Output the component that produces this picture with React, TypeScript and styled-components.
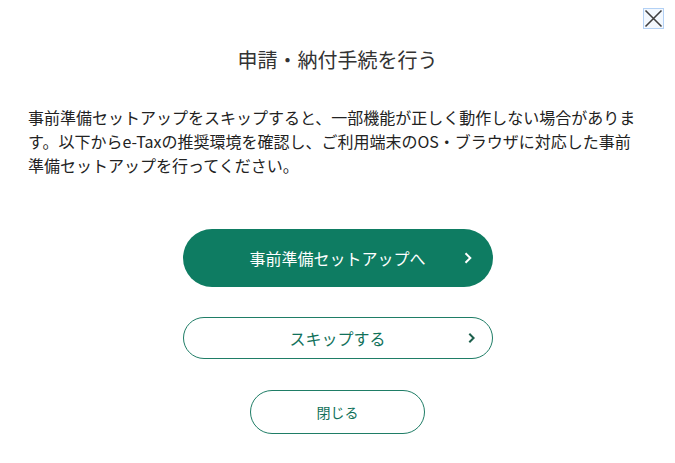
import React from 'react'
import styled, { createGlobalStyle } from 'styled-components'

const GlobalStyle = createGlobalStyle`
  html, body {
    margin: 0;
    padding: 0;
    background: #ffffff;
  }
  body {
    font-family: "Noto Sans CJK JP", "Noto Sans", sans-serif;
    color: #222222;
  }
`

const Dialog = styled.section`
  position: relative;
  width: 675px;
  height: 463px;
  box-sizing: border-box;
  padding: 46px 36px 0 28px;
  display: flex;
  flex-direction: column;
  align-items: center;
  background: #fff;
`

const CloseButton = styled.button`
  position: absolute;
  top: 8px;
  right: 11px;
  width: 21px;
  height: 21px;
  padding: 0;
  border: 1px solid #b3d1f5;
  background: #f3f8fe;
  display: flex;
  align-items: center;
  justify-content: center;
  cursor: pointer;
`

const Title = styled.h2`
  margin: 0 0 0 8px;
  font-size: 20px;
  line-height: 28px;
  font-weight: normal;
  color: #333333;
  text-align: center;
`

const Lead = styled.p`
  margin: 31px 0 0;
  align-self: stretch;
  font-size: 16px;
  line-height: 24px;
  color: #222222;
`

const Actions = styled.div`
  margin-top: 52px;
  margin-left: 8px;
  display: flex;
  flex-direction: column;
  align-items: center;
  gap: 30px;
`

const PillButton = styled.button<{ $variant: 'primary' | 'secondary' | 'close' }>`
  position: relative;
  box-sizing: border-box;
  display: flex;
  align-items: center;
  justify-content: center;
  font-family: "Noto Sans CJK JP", "Noto Sans", sans-serif;
  border-radius: 999px;
  cursor: pointer;
  width: ${p => (p.$variant === 'close' ? '175px' : '310px')};
  height: ${p => (p.$variant === 'primary' ? '58px' : p.$variant === 'secondary' ? '42px' : '44px')};
  font-size: ${p => (p.$variant === 'close' ? '14px' : '16px')};
  background: ${p => (p.$variant === 'primary' ? '#0e7c62' : '#ffffff')};
  color: ${p => (p.$variant === 'primary' ? '#ffffff' : '#11715a')};
  border: ${p => (p.$variant === 'primary' ? 'none' : '1.5px solid #1f7d66')};
  font-weight: normal;
  margin-top: ${p => (p.$variant === 'close' ? '1px' : '0')};
`

const Chevron = styled.svg<{ $right: number }>`
  position: absolute;
  right: ${p => p.$right}px;
  top: 50%;
  transform: translateY(-50%);
`

function App() {
  return (
    <>
      <GlobalStyle />
      <Dialog>
        <CloseButton aria-label="閉じる">
          <svg width="19" height="19" viewBox="0 0 19 19">
            <path d="M1.5 1.5 L17.5 17.5 M17.5 1.5 L1.5 17.5" stroke="#3f3f3f" strokeWidth="1.6" fill="none" />
          </svg>
        </CloseButton>
        <Title>申請・納付手続を行う</Title>
        <Lead>
          事前準備セットアップをスキップすると、一部機能が正しく動作しない場合があります。以下からe-Taxの推奨環境を確認し、ご利用端末のOS・ブラウザに対応した事前準備セットアップを行ってください。
        </Lead>
        <Actions>
          <PillButton $variant="primary">
            事前準備セットアップへ
            <Chevron $right={21} width="8" height="12" viewBox="0 0 8 12">
              <path d="M1.5 1.2 L6.3 6 L1.5 10.8" stroke="#ffffff" strokeWidth="2" fill="none" />
            </Chevron>
          </PillButton>
          <PillButton $variant="secondary">
            スキップする
            <Chevron $right={17} width="7" height="11" viewBox="0 0 7 11">
              <path d="M1.3 1.2 L5.6 5.5 L1.3 9.8" stroke="#1c5f4c" strokeWidth="2" fill="none" />
            </Chevron>
          </PillButton>
          <PillButton $variant="close">閉じる</PillButton>
        </Actions>
      </Dialog>
    </>
  )
}

export default App
